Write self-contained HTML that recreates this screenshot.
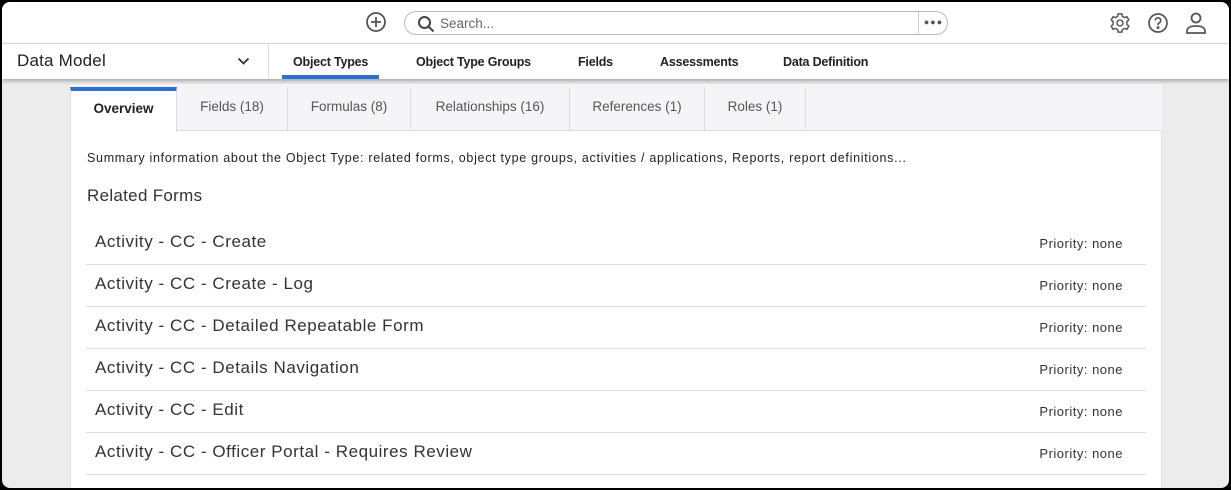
<!DOCTYPE html>
<html><head><style>
*{box-sizing:border-box;margin:0;padding:0}
body{width:1231px;height:490px;background:#000;font-family:"Liberation Sans",sans-serif;overflow:hidden}
.frame{position:absolute;left:2px;top:2px;width:1227px;height:486px;background:#ececec;border-radius:8px;overflow:hidden}
.top{position:absolute;left:0;top:0;width:100%;height:42px;background:#fff;border-bottom:1px solid #ddd}
.nav{position:absolute;left:0;top:42px;width:100%;height:35px;background:#fff;box-shadow:0 2px 4px rgba(0,0,0,.3);z-index:2}
.search{position:absolute;left:402px;top:9px;width:544px;height:24px;border:1px solid #bbb;border-radius:12px}
.search span{position:absolute;left:35px;top:4px;font-size:13.5px;color:#666}
.search .dots{position:absolute;left:513px;top:0;width:30px;height:22px;border-left:1px solid #ccc;text-align:center;font-size:9px;color:#555;line-height:21px;letter-spacing:1px}
.dm{position:absolute;left:15px;top:7px;font-size:17px;color:#222;letter-spacing:.2px}
.sep{position:absolute;left:266px;top:0;height:35px;border-left:1px solid #ddd}
.nl{position:absolute;top:11px;font-size:12.5px;font-weight:bold;color:#222;letter-spacing:-.2px}
.panel{position:absolute;left:68px;top:82px;width:1092px;height:410px;background:#f5f5f7}
.tab{position:absolute;top:3px;height:46px;border-right:1px solid #ddd;font-size:13.5px;color:#555;text-align:center;line-height:40px}
.card{position:absolute;left:0;top:46px;width:1092px;height:370px;background:#fff;border:1px solid #ddd;border-radius:3px}
.row{position:absolute;left:15px;width:1060px;height:42px;border-bottom:1px solid #ddd}
.row .t{position:absolute;left:9px;top:9px;font-size:17px;color:#333;letter-spacing:.55px}
.row .p{position:absolute;right:23px;top:13px;font-size:13px;color:#333;letter-spacing:.5px}
</style></head><body><div class="frame">
<div class="top">
<svg style="position:absolute;left:363px;top:9px" width="22" height="22" viewBox="0 0 22 22" fill="none" stroke="#555" stroke-width="1.8"><circle cx="11" cy="11" r="9"/><path d="M11 6v10M6 11h10"/></svg>
<div class="search"><svg style="position:absolute;left:12px;top:3px" width="18" height="18" viewBox="0 0 18 18" fill="none" stroke="#444" stroke-width="2"><circle cx="7.5" cy="7.5" r="5.5"/><path d="M11.5 11.5l5 5"/></svg><span>Search...</span><div class="dots">●●●</div></div>
<svg style="position:absolute;left:1107px;top:10px" width="22" height="22" viewBox="0 0 24 24" fill="none" stroke="#555" stroke-width="1.6"><circle cx="12" cy="12" r="3.2"/><path d="M10 2h4l.6 2.8 2.3 1.3 2.7-.9 2 3.5-2.1 1.9v2.8l2.1 1.9-2 3.5-2.7-.9-2.3 1.3L14 22h-4l-.6-2.8-2.3-1.3-2.7.9-2-3.5 2.1-1.9v-2.8L2.4 8.7l2-3.5 2.7.9 2.3-1.3z"/></svg>
<svg style="position:absolute;left:1145px;top:10px" width="22" height="22" viewBox="0 0 22 22" fill="none" stroke="#555" stroke-width="1.7"><circle cx="11" cy="11" r="9"/><path d="M8.3 8.5a2.7 2.7 0 1 1 3.5 2.6c-.6.3-.8.7-.8 1.4v.6"/><circle cx="11" cy="15.6" r=".6" fill="#555"/></svg>
<svg style="position:absolute;left:1183px;top:9px" width="22" height="24" viewBox="0 0 22 24" fill="none" stroke="#555" stroke-width="1.8"><circle cx="11" cy="7" r="4.5"/><path d="M2 22v-2c0-3 3-5 9-5s9 2 9 5v2z"/></svg>
</div>
<div class="nav">
<div class="dm">Data Model</div>
<svg style="position:absolute;left:235px;top:13px" width="13" height="9" viewBox="0 0 13 9" fill="none" stroke="#333" stroke-width="1.8"><path d="M1.5 1.5l5 5 5-5"/></svg>
<div class="sep"></div>
<div class="nl" style="left:291px">Object Types</div>
<div style="position:absolute;left:280px;top:31px;width:97px;height:4px;background:#2a6fd1"></div>
<div class="nl" style="left:414px">Object Type Groups</div>
<div class="nl" style="left:576px">Fields</div>
<div class="nl" style="left:658px">Assessments</div>
<div class="nl" style="left:781px">Data Definition</div>
</div>
<div class="panel">
<div class="tab" style="left:0;width:107px;background:#fff;color:#222;font-weight:bold;border-top:4px solid #2a6fd1;line-height:36px;height:45px;z-index:2;border-left:1px solid #ddd">Overview</div>
<div class="tab" style="left:107px;width:111px">Fields (18)</div>
<div class="tab" style="left:218px;width:123px">Formulas (8)</div>
<div class="tab" style="left:341px;width:159px">Relationships (16)</div>
<div class="tab" style="left:500px;width:135px">References (1)</div>
<div class="tab" style="left:635px;width:101px">Roles (1)</div>
<div class="card">
<div style="position:absolute;left:16px;top:20px;font-size:12.5px;color:#222;letter-spacing:.7px">Summary information about the Object Type: related forms, object type groups, activities / applications, Reports, report definitions...</div>
<div style="position:absolute;left:16px;top:55px;font-size:17px;color:#333;letter-spacing:.3px">Related Forms</div>
<div class="row" style="top:92px"><div class="t">Activity - CC - Create</div><div class="p">Priority: none</div></div>
<div class="row" style="top:134px"><div class="t">Activity - CC - Create - Log</div><div class="p">Priority: none</div></div>
<div class="row" style="top:176px"><div class="t">Activity - CC - Detailed Repeatable Form</div><div class="p">Priority: none</div></div>
<div class="row" style="top:218px"><div class="t">Activity - CC - Details Navigation</div><div class="p">Priority: none</div></div>
<div class="row" style="top:260px"><div class="t">Activity - CC - Edit</div><div class="p">Priority: none</div></div>
<div class="row" style="top:302px"><div class="t">Activity - CC - Officer Portal - Requires Review</div><div class="p">Priority: none</div></div>
</div></div>
</div></body></html>
